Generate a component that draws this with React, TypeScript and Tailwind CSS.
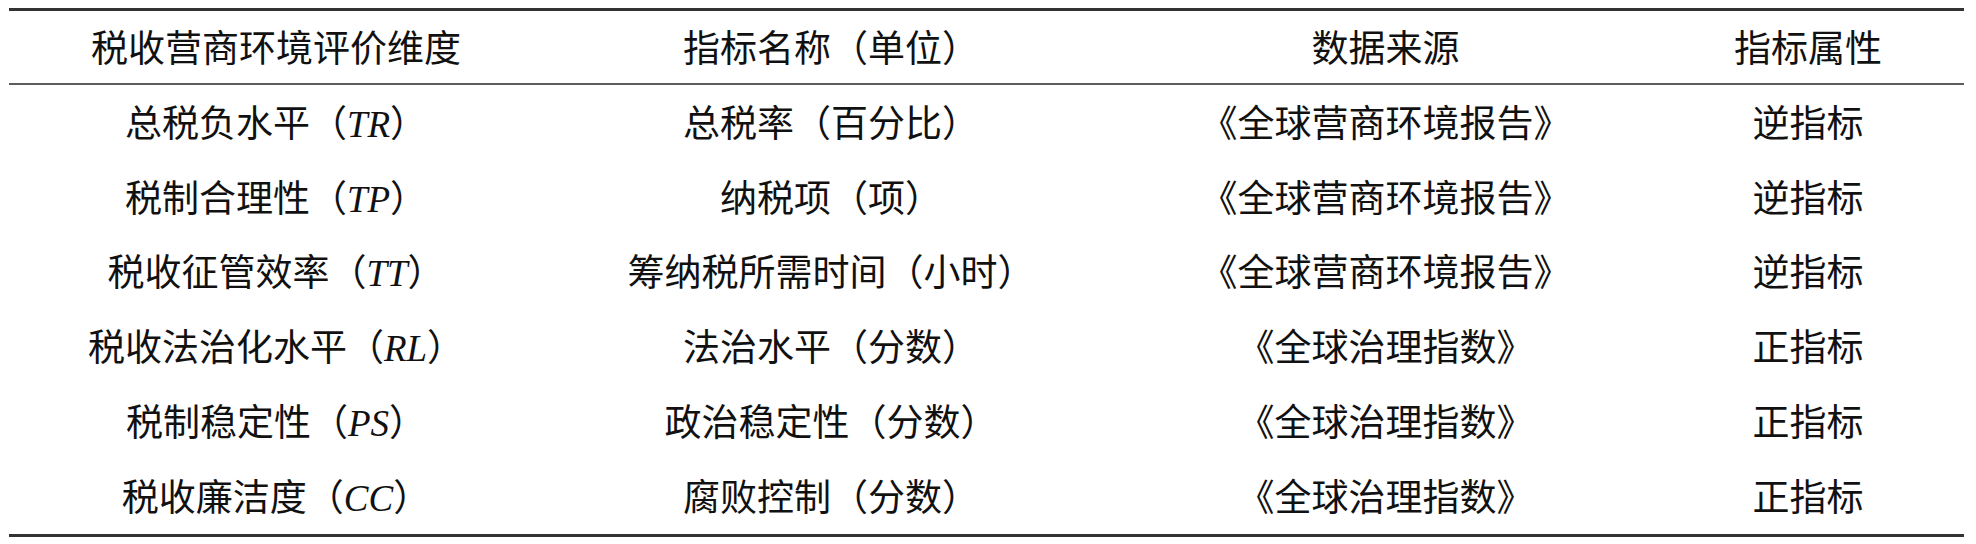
import React from 'react'

type Row = {
  dim: string
  code: string
  name: string
  source: string
  attr: string
}

const rows: Row[] = [
  { dim: '总税负水平', code: 'TR', name: '总税率（百分比）', source: '《全球营商环境报告》', attr: '逆指标' },
  { dim: '税制合理性', code: 'TP', name: '纳税项（项）', source: '《全球营商环境报告》', attr: '逆指标' },
  { dim: '税收征管效率', code: 'TT', name: '筹纳税所需时间（小时）', source: '《全球营商环境报告》', attr: '逆指标' },
  { dim: '税收法治化水平', code: 'RL', name: '法治水平（分数）', source: '《全球治理指数》', attr: '正指标' },
  { dim: '税制稳定性', code: 'PS', name: '政治稳定性（分数）', source: '《全球治理指数》', attr: '正指标' },
  { dim: '税收廉洁度', code: 'CC', name: '腐败控制（分数）', source: '《全球治理指数》', attr: '正指标' },
]

const font = { fontFamily: '"Liberation Serif", "Noto Sans CJK SC", serif' }

// column widths picked so the text centres line up with the scan
const cols = 'grid grid-cols-[534px_576px_533px_312px]'
const cell = 'pt-[4px] text-center'

export default function App() {
  return (
    <div className="min-h-[544px] w-[1976px] bg-white pt-[8px] text-[#111]" style={font}>
      <div className="ml-[9px] w-[1955px] border-t-[3px] border-b-[3px] border-[#333]">
        <div className={`${cols} h-[74px] items-center border-b-2 border-[#5c5c5c] text-[37px] leading-none`}>
          <div className={cell}>税收营商环境评价维度</div>
          <div className={cell}>指标名称（单位）</div>
          <div className={cell}>数据来源</div>
          <div className={cell}>指标属性</div>
        </div>
        {rows.map((r) => (
          <div key={r.code} className={`${cols} h-[74.8px] items-center text-[37px] leading-none`}>
            <div className={cell}>
              {r.dim}（<i>{r.code}</i>）
            </div>
            <div className={cell}>{r.name}</div>
            <div className={cell}>{r.source}</div>
            <div className={cell}>{r.attr}</div>
          </div>
        ))}
      </div>
    </div>
  )
}
